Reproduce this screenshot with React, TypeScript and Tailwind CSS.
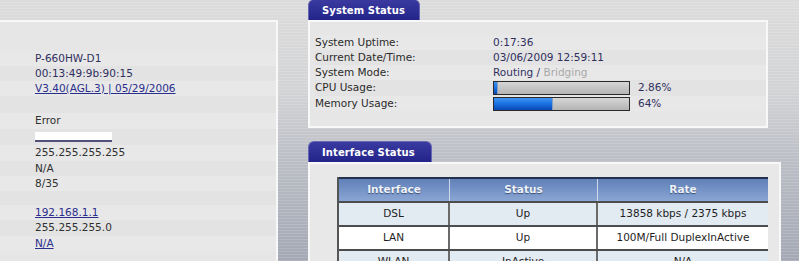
import React from "react";

const font = { fontFamily: '"DejaVu Sans", Verdana, sans-serif' };

type LRow = { h: number; text?: string; kind?: "navy" | "link" | "plain" | "bar" };

const leftRows: LRow[] = [
  { h: 15, text: "P-660HW-D1", kind: "navy" },
  { h: 15, text: "00:13:49:9b:90:15", kind: "navy" },
  { h: 15, text: "V3.40(AGL.3) | 05/29/2006", kind: "link" },
  { h: 17 },
  { h: 16, text: "Error", kind: "plain" },
  { h: 16, kind: "bar" },
  { h: 16, text: "255.255.255.255", kind: "plain" },
  { h: 15, text: "N/A", kind: "plain" },
  { h: 15, text: "8/35", kind: "plain" },
  { h: 14 },
  { h: 15, text: "192.168.1.1", kind: "link" },
  { h: 16, text: "255.255.255.0", kind: "plain" },
  { h: 16, text: "N/A", kind: "link" },
];

function Bar({ pct }: { pct: number }) {
  return (
    <div className="w-[137px] h-[14px] border border-[#2a2a2a] bg-gradient-to-b from-[#d6d6d6] to-[#b4b4b4] flex">
      <div
        className="h-full bg-gradient-to-b from-[#3d93f2] via-[#1a6fe0] to-[#0a48b5] border-r border-[#8aa0c0]"
        style={{ width: `${pct}%` }}
      />
    </div>
  );
}

export default function App() {
  return (
    <div
      className="w-[799px] h-[261px] overflow-hidden flex items-start text-[10.5px] bg-[image:repeating-linear-gradient(0deg,rgba(255,255,255,0.14)_0px,rgba(255,255,255,0.14)_1px,transparent_1px,transparent_3px),linear-gradient(180deg,#dcdcdc_0%,#d2d3d5_35%,#bcbfc6_60%,#a4a8b4_100%)]"
      style={font}
    >
      {/* Left panel */}
      <div className="w-[278px] h-[260px] mt-[20px] shrink-0 border-t-2 border-r-2 border-[#f8f8f8] bg-[#e6e6e6] pt-[29px]">
        {leftRows.map((r, i) => (
          <div
            key={i}
            className={`flex items-center pl-[35px] ${i % 2 === 0 ? "bg-[#e8e8e8]" : "bg-[#e3e3e3]"}`}
            style={{ height: r.h }}
          >
            {r.kind === "navy" && <span className="text-[#30305e]">{r.text}</span>}
            {r.kind === "plain" && <span className="text-[#303030]">{r.text}</span>}
            {r.kind === "link" && <span className="text-[#2b2f8c] underline">{r.text}</span>}
            {r.kind === "bar" && (
              <div className="w-[77px] h-[10px] bg-white border-b-2 border-[#50507a]" />
            )}
          </div>
        ))}
      </div>

      {/* Right column */}
      <div className="ml-[30px] w-[474px] shrink-0 flex flex-col">
        <div className="w-[112px] h-[20px] rounded-t-[5px] bg-gradient-to-b from-[#3a3aa0] to-[#23238a] border-l border-r border-[#6666b4] flex items-center pl-[13px] text-white font-bold text-[10px] tracking-[0.1px]">
          System Status
        </div>
        <div className="w-[460px] h-[108px] border-2 border-[#f8f8f8] bg-[#e6e6e6] pt-[13px] pl-[5px] text-[#2a2a2a]">
          {[
            { h: 15, l: "System Uptime:", v: <span className="text-[#30305e]">0:17:36</span> },
            { h: 15, l: "Current Date/Time:", v: <span className="text-[#30305e]">03/06/2009 12:59:11</span> },
            {
              h: 15,
              l: "System Mode:",
              v: (
                <span className="text-[#30305e]">
                  Routing / <span className="text-[#a8a8a8]">Bridging</span>
                </span>
              ),
            },
            {
              h: 16,
              l: "CPU Usage:",
              v: (
                <div className="flex items-center">
                  <Bar pct={3} />
                  <span className="ml-[8px] text-[#30305e]">2.86%</span>
                </div>
              ),
            },
            {
              h: 15,
              l: "Memory Usage:",
              v: (
                <div className="flex items-center">
                  <Bar pct={44} />
                  <span className="ml-[8px] text-[#30305e]">64%</span>
                </div>
              ),
            },
          ].map((r, i) => (
            <div
              key={i}
              className={`flex items-center ${i % 2 === 0 ? "bg-[#e8e8e8]" : "bg-[#e3e3e3]"}`}
              style={{ height: r.h }}
            >
              <div className="w-[178px] shrink-0">{r.l}</div>
              <div>{r.v}</div>
            </div>
          ))}
        </div>

        <div className="mt-[13px] w-[124px] h-[21px] rounded-t-[6px] bg-gradient-to-b from-[#3a3aa0] to-[#23238a] border-l border-r border-t border-[#6666b4] flex items-center pl-[13px] text-white font-bold text-[10px] tracking-[0.1px]">
          Interface Status
        </div>
        <div className="w-[473px] h-[120px] border-2 border-b-0 border-[#f8f8f8] bg-[#e8e8e8] pt-[13px] pl-[27px]">
          <div className="w-[431px] border-l-2 border-[#555]">
            <div className="flex h-[24px] border-t-2 border-[#23314f] bg-gradient-to-b from-[#6080b8] to-[#8aa6d4] text-[#eef2fa] font-bold [text-shadow:0_1px_1px_rgba(20,30,60,0.6)]">
              <div className="w-[111px] flex items-center justify-center border-r border-[#d0d8e8]">Interface</div>
              <div className="w-[148px] flex items-center justify-center border-r border-[#d0d8e8]">Status</div>
              <div className="flex-1 flex items-center justify-center">Rate</div>
            </div>
            {[
              ["DSL", "Up", "13858 kbps / 2375 kbps", "bg-[#e2eaf2]"],
              ["LAN", "Up", "100M/Full DuplexInActive", "bg-white"],
              ["WLAN", "InActive", "N/A", "bg-[#e2eaf2]"],
            ].map((r, i) => (
              <div key={i} className={`flex h-[24px] border-t-2 border-[#4c4c4c] text-[#1e1e1e] ${r[3]}`}>
                <div className="w-[111px] flex items-center justify-center border-r-2 border-[#6a6a6a]">{r[0]}</div>
                <div className="w-[148px] flex items-center justify-center border-r-2 border-[#6a6a6a]">{r[1]}</div>
                <div className="flex-1 flex items-center justify-center">{r[2]}</div>
              </div>
            ))}
          </div>
        </div>
      </div>
    </div>
  );
}
